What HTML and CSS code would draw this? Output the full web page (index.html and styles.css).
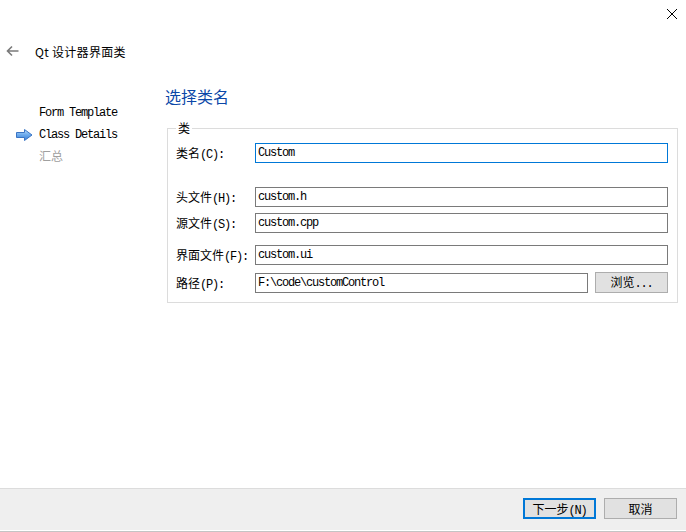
FILE: index.html
```html
<!DOCTYPE html>
<html lang="zh-CN">
<head>
<meta charset="utf-8">
<title>Qt 设计器界面类</title>
<link rel="stylesheet" href="styles.css">
</head>
<body>
<div class="topbar">
  <svg class="close" width="12" height="12" viewBox="0 0 12 12"><path d="M1 1 L11 11 M11 1 L1 11" stroke="#000" stroke-width="1" fill="none"/></svg>
</div>
<div class="titlerow">
  <svg class="back" width="14" height="12" viewBox="0 0 14 12"><path d="M1.5 6 H12.5 M6 1.5 L1.5 6 L6 10.5" stroke="#7a7a7a" stroke-width="1.6" fill="none"/></svg>
  <span class="title">Qt 设计器界面类</span>
</div>
<div class="main">
  <ul class="nav">
    <li class="navitem"><span class="marker"></span><span class="lat">Form Template</span></li>
    <li class="navitem current"><span class="marker"><svg width="17" height="12" viewBox="0 0 17 12"><defs><linearGradient id="ag" x1="0" y1="0" x2="0" y2="1"><stop offset="0" stop-color="#b9dbfb"/><stop offset="0.5" stop-color="#6aa9ec"/><stop offset="1" stop-color="#3b7fd6"/></linearGradient></defs><path d="M0.5 3.5 H8.5 V0.5 L16 6 L8.5 11.5 V8.5 H0.5 Z" fill="url(#ag)" stroke="#3a74c4" stroke-width="1"/></svg></span><span class="lat">Class Details</span></li>
    <li class="navitem disabled"><span class="marker"></span><span>汇总</span></li>
  </ul>
  <div class="content">
    <h1 class="heading">选择类名</h1>
    <fieldset class="group">
      <legend class="legend">类</legend>
      <div class="row">
        <label class="label">类名<span class="lat">(C):</span></label>
        <div class="field focus lat">Custom</div>
      </div>
      <div class="row gap-lg">
        <label class="label">头文件<span class="lat">(H):</span></label>
        <div class="field lat">custom.h</div>
      </div>
      <div class="row">
        <label class="label">源文件<span class="lat">(S):</span></label>
        <div class="field lat">custom.cpp</div>
      </div>
      <div class="row gap-md">
        <label class="label">界面文件<span class="lat">(F):</span></label>
        <div class="field lat">custom.ui</div>
      </div>
      <div class="row tall">
        <label class="label">路径<span class="lat">(P):</span></label>
        <div class="field lat">F:\code\customControl</div>
        <button class="btn browse">浏览<span class="lat">...</span></button>
      </div>
    </fieldset>
  </div>
</div>
<div class="footer">
  <button class="btn primary">下一步<span class="lat">(N)</span></button>
  <button class="btn">取消</button>
</div>
<div class="bottomedge"></div>
</body>
</html>
```

FILE: styles.css
```css
* { box-sizing: border-box; }
html, body { margin: 0; padding: 0; }
body {
  width: 686px;
  height: 532px;
  background: #ffffff;
  display: flex;
  flex-direction: column;
  font-family: "Noto Sans CJK SC", "Noto Sans", sans-serif;
  font-size: 12px;
  color: #000;
  overflow: hidden;
}
.lat {
  font-family: "Liberation Mono", "Noto Sans CJK SC", monospace;
  letter-spacing: -1.2px;
}
.topbar {
  height: 28px;
  display: flex;
  justify-content: flex-end;
  align-items: flex-start;
  padding: 8px 8px 0 0;
}
.close { display: block; }
.titlerow {
  height: 48px;
  display: flex;
  align-items: center;
  padding-left: 6px;
}
.back { display: block; margin-top: -3px; }
.title {
  margin-left: 15px;
  font-size: 12px;
  line-height: 16px;
  letter-spacing: 0.3px;
}
.main {
  flex: 1;
  display: flex;
}
.nav {
  list-style: none;
  margin: 0;
  padding: 26px 0 0 16px;
  width: 166px;
}
.navitem {
  height: 22px;
  display: flex;
  align-items: center;
  overflow: hidden;
}
.marker {
  width: 23px;
  display: flex;
  align-items: center;
}
.marker svg { display: block; }
.disabled { color: #a0a0a0; height: 18px; }
.content {
  flex: 1;
  padding-right: 8px;
}
.heading {
  margin: 10px 0 15px 0;
  font-size: 16px;
  line-height: 20px;
  font-weight: normal;
  color: #0b47a8;
}
.group {
  margin: 0 0 0 2px;
  border: 1px solid #dcdcdc;
  padding: 8px 9px 9px 8px;
  width: 511px;
}
.legend {
  padding: 0 2px;
  margin-left: 0;
  line-height: 14px;
  font-size: 12px;
}
.row {
  display: flex;
  align-items: center;
  height: 20px;
  margin-top: 6px;
  overflow: hidden;
}
.row.tall { height: 21px; margin-top: 7px; }
.row:first-of-type { margin-top: 0; }
.gap-lg { margin-top: 24px; }
.gap-md { margin-top: 12px; }
.label {
  width: 79px;
  height: 20px;
  line-height: 20px;
  white-space: nowrap;
  flex-shrink: 0;
}
.field {
  flex: 1;
  height: 20px;
  border: 1px solid #7a7a7a;
  padding: 0 2px;
  line-height: 18px;
  background: #fff;
  white-space: nowrap;
  overflow: hidden;
}
.field.focus { border-color: #0078d7; }
.btn {
  height: 21px;
  width: 73px;
  flex-shrink: 0;
  border: 1px solid #adadad;
  background: #e1e1e1;
  font-family: "Noto Sans CJK SC", "Noto Sans", sans-serif;
  font-size: 12px;
  color: #000;
  padding: 0;
  line-height: 18px;
  overflow: hidden;
}
.browse { margin-left: 7px; }
.footer {
  height: 42px;
  border-top: 1px solid #dcdcdc;
  background: #efefef;
  display: flex;
  justify-content: flex-end;
  align-items: flex-start;
  padding: 9px 9px 0 0;
  gap: 8px;
}
.primary { border: 2px solid #0078d7; }
.bottomedge {
  height: 2px;
  border-top: 1px solid #ffffff;
  background: #c4c4c4;
}
```
